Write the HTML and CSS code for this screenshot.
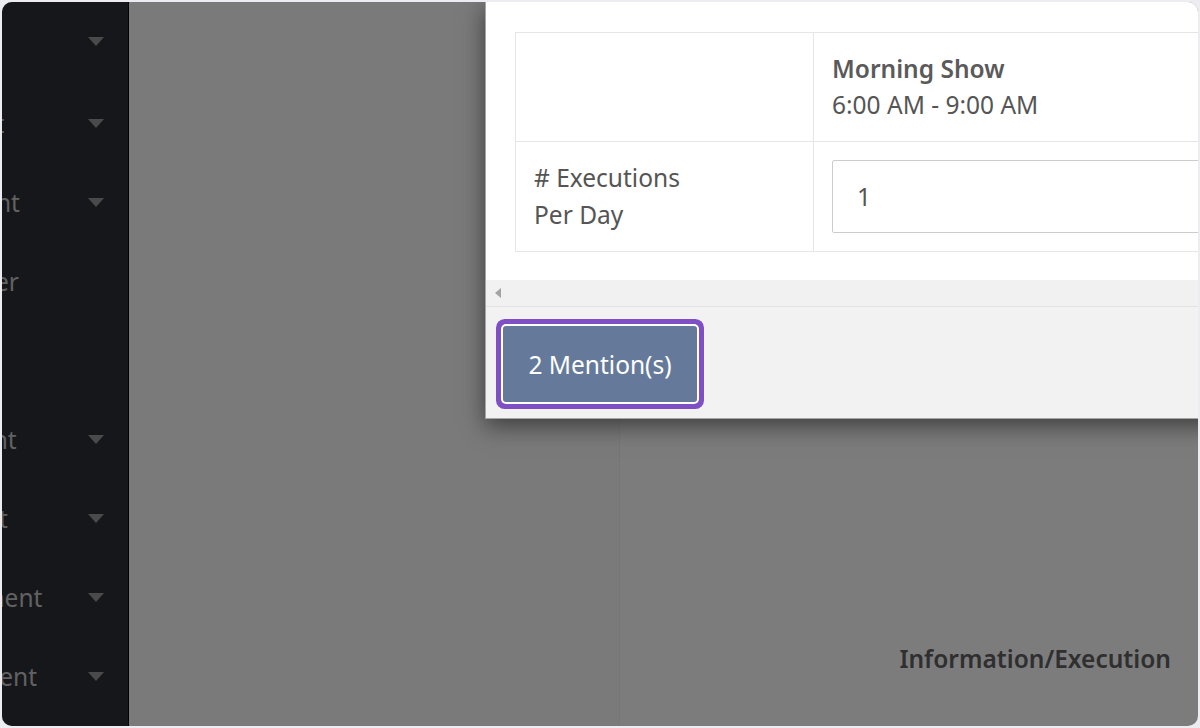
FILE: index.html
```html
<!DOCTYPE html>
<html lang="en">
<head>
<meta charset="utf-8">
<title>Mentions</title>
<link rel="stylesheet" href="styles.css">
</head>
<body>
<div class="screen">
  <aside class="sidebar">
    <nav class="nav">
      <div class="nav-item"><span class="nav-label">Home</span><span class="caret"></span></div>
      <div class="nav-item"><span class="nav-label">Contract</span><span class="caret"></span></div>
      <div class="nav-item"><span class="nav-label">Comment</span><span class="caret"></span></div>
      <div class="nav-item"><span class="nav-label">Customer</span></div>
      <div class="nav-item"><span class="nav-label">Reports</span></div>
      <div class="nav-item"><span class="nav-label">Shipment</span><span class="caret"></span></div>
      <div class="nav-item"><span class="nav-label">Payment</span><span class="caret"></span></div>
      <div class="nav-item"><span class="nav-label">Assignment</span><span class="caret"></span></div>
      <div class="nav-item"><span class="nav-label">Investment</span><span class="caret"></span></div>
    </nav>
  </aside>
  <main class="main">
    <section class="panel panel-left"></section>
    <section class="panel panel-right">
      <h2 class="panel-title">Information/Execution</h2>
    </section>
  </main>

  <div class="backdrop"></div>

  <div class="modal">
    <div class="modal-body">
      <table class="grid">
        <tr>
          <th class="col-label"></th>
          <th class="col-show">
            <div class="show-name">Morning Show</div>
            <div class="show-time">6:00 AM - 9:00 AM</div>
          </th>
        </tr>
        <tr>
          <td class="col-label row-label">
            <div># Executions</div>
            <div>Per Day</div>
          </td>
          <td class="col-show">
            <input class="field" type="text" value="1">
          </td>
        </tr>
      </table>
    </div>
    <div class="hscroll"><span class="hscroll-arrow"></span></div>
    <div class="modal-footer">
      <button class="btn-mentions" type="button">2 Mention(s)</button>
    </div>
  </div>
</div>
</body>
</html>
```

FILE: styles.css
```css
* { box-sizing: border-box; }

html, body {
  margin: 0;
  padding: 0;
}

body {
  background: #ececf1;
  font-family: "Noto Sans", "Open Sans", sans-serif;
  width: 1200px;
  height: 728px;
  overflow: hidden;
}

.screen {
  position: relative;
  margin: 2px;
  width: 1196px;
  height: 724px;
  border-radius: 10px;
  overflow: hidden;
  display: flex;
  background: #f6f6f6;
}

/* ---------- sidebar ---------- */
.sidebar {
  flex: none;
  width: 127px;
  height: 100%;
  background: #2c2e36;
  border-right: 1px solid #000;
  overflow: hidden;
}

.nav {
  display: flex;
  flex-direction: column;
}

.nav-item {
  height: 79px;
  display: flex;
  align-items: center;
  padding-right: 24px;
  font-size: 24.5px;
  color: #c2c2c2;
  white-space: nowrap;
}

.nav-item:first-child {
  height: 82px;
  padding-bottom: 4px;
}

.nav-label {
  flex: none;
  margin-left: -96px;
}

.caret {
  margin-left: auto;
  width: 0;
  height: 0;
  border-left: 8.5px solid transparent;
  border-right: 8.5px solid transparent;
  border-top: 9px solid #959595;
}

/* ---------- page behind the modal ---------- */
.main {
  flex: 1;
  display: flex;
  height: 100%;
}

.panel-left {
  width: 491px;
  flex: none;
  background: #f4f4f4;
  border-right: 1px solid #ececec;
}

.panel-right {
  flex: 1;
  background: #f8f8f8;
  display: flex;
  flex-direction: column;
  justify-content: flex-end;
  align-items: flex-end;
  padding: 0 27px 49px 0;
}

.panel-title {
  margin: 0;
  font-size: 24.5px;
  line-height: 36px;
  font-weight: 600;
  color: #5e5e5e;
}

.backdrop {
  position: absolute;
  inset: 0;
  background: rgba(0, 0, 0, 0.5);
}

/* ---------- modal ---------- */
.modal {
  position: absolute;
  top: -1px;
  left: 483px;
  width: 1000px;
  background: #fff;
  border: 1px solid rgba(0, 0, 0, 0.35);
  box-shadow: 0 7px 22px rgba(0, 0, 0, 0.5);
  color: #555;
}

.modal-body {
  padding: 30px 29px 28px 29px;
}

.grid {
  border-collapse: collapse;
  font-size: 24.5px;
  line-height: 36px;
  width: 960px;
}

.grid th,
.grid td {
  border: 1px solid #e6e6e6;
  padding: 18px;
  text-align: left;
  vertical-align: middle;
  font-weight: 400;
}

.grid .col-label {
  width: 298px;
}

.grid .row-label div + div {
  margin-top: 1px;
}

.show-name {
  font-weight: 600;
  color: #5a5a5a;
}

.field {
  display: block;
  width: 100%;
  height: 73px;
  border: 1px solid #cccccc;
  border-radius: 2px;
  padding: 0 24px;
  font-family: inherit;
  font-size: 24.5px;
  color: #555;
  background: #fff;
}

.hscroll {
  height: 26px;
  background: #f1f1f1;
  display: flex;
  align-items: center;
  padding-left: 9px;
}

.hscroll-arrow {
  width: 0;
  height: 0;
  border-top: 5px solid transparent;
  border-bottom: 5px solid transparent;
  border-right: 6px solid #a3a3a3;
}

.modal-footer {
  height: 112px;
  background: #f2f2f2;
  border-top: 1px solid #e2e2e2;
  padding: 19px 18px 0;
}

.btn-mentions {
  display: block;
  width: 194px;
  height: 76px;
  margin-left: -1px;
  background: #657a9b;
  color: #fff;
  border: none;
  border-radius: 3px;
  font-family: inherit;
  font-size: 24.5px;
  box-shadow: 0 0 0 2px #ffffff, 0 0 0 7px #7f4fc4;
  cursor: pointer;
}
```
